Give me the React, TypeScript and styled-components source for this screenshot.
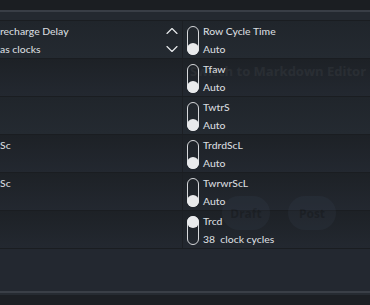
import React from "react";
import styled, { createGlobalStyle } from "styled-components";
import { ChevronUp, ChevronDown } from "lucide-react";

const Global = createGlobalStyle`
  html, body { margin: 0; padding: 0; background: #1c1f24; }
  body { font-family: Lato, "Open Sans", sans-serif; overflow: hidden; }
`;

const Page = styled.div`
  position: relative;
  width: 370px;
  height: 305px;
  display: flex;
  flex-direction: column;
  background: #1c1f24;
  overflow: hidden;
`;

const TopStrip = styled.div`
  height: 10px;
  background: #1b1e22;
  border-bottom: 2px solid #393e46;
`;

const HeaderBand = styled.div`
  height: 8px;
  background: #242930;
`;

const Rows = styled.div`
  display: flex;
  flex-direction: column;
`;

const Row = styled.div<{ $tone: "light" | "dark" }>`
  height: 38px;
  box-sizing: border-box;
  display: grid;
  grid-template-columns: 183px 1fr;
  border-top: 1px solid #1a1d21;
  background: ${(p) =>
    p.$tone === "light"
      ? "linear-gradient(#20252b, #242a31)"
      : "linear-gradient(#1d2126, #232830)"};
`;

const LeftCell = styled.div`
  display: grid;
  grid-template-columns: 1fr 20px;
  grid-template-rows: 18px 18px;
  align-items: center;
  padding-top: 1px;
  overflow: hidden;
  border-right: 1px solid #1c1f24;
`;

const LeftText = styled.span`
  font-size: 10.4px;
  font-weight: 500;
  color: #d6dadf;
  white-space: nowrap;
  line-height: 18px;
`;

const Chevron = styled.span`
  display: flex;
  align-items: center;
  justify-content: center;
  color: #e6e8ea;
`;

const RightCell = styled.div`
  display: flex;
  align-items: center;
  gap: 4px;
  padding-left: 4px;
`;

const Switch = styled.div<{ $on: boolean }>`
  width: 12px;
  height: 29px;
  box-sizing: border-box;
  border: 1.3px solid #d6d8db;
  border-radius: 6px;
  display: flex;
  flex-direction: column;
  justify-content: ${(p) => (p.$on ? "flex-start" : "flex-end")};
  align-items: center;
  margin-top: 1px;
`;

const Knob = styled.div`
  width: 12px;
  height: 12px;
  border-radius: 50%;
  background: #e9eaec;
  flex-shrink: 0;
  margin: -1px;
`;

const Texts = styled.div`
  display: flex;
  flex-direction: column;
  justify-content: center;
`;

const Label = styled.span`
  font-size: 10.4px;
  font-weight: 500;
  line-height: 18px;
  color: #d6dadf;
  white-space: pre;
`;

const Footer = styled.div`
  flex: 1;
  display: flex;
  flex-direction: column;
`;

const FooterBody = styled.div`
  height: 42px;
  border-top: 1px solid #1a1d21;
  background: #232830;
`;

const FooterLine = styled.div`
  height: 2px;
  background: #3a3f47;
`;

const FooterBottom = styled.div`
  flex: 1;
  background: #1c1f24;
  border-top: 2px solid #262b32;
`;

/* faint ghost layer from a cross-fade, lying over the content */
const Ghost = styled.div`
  position: absolute;
  inset: 0;
  pointer-events: none;
  opacity: 0.045;
  color: #ffffff;
  font-family: "Open Sans", sans-serif;
`;

const GhostTitle = styled.span`
  position: absolute;
  left: 190px;
  top: 62px;
  font-size: 13px;
  font-weight: 700;
  white-space: nowrap;
`;

const GhostButton = styled.span<{ $x: number }>`
  position: absolute;
  left: ${(p) => p.$x}px;
  top: 196px;
  width: 48px;
  height: 34px;
  border-radius: 17px;
  background: #8aa6d8;
  display: flex;
  align-items: center;
  justify-content: center;
  font-size: 12px;
  font-weight: 700;
  color: #000;
`;

type RowData = {
  left?: [string, string];
  chevrons?: boolean;
  label: string;
  value: string;
  on: boolean;
  tone: "light" | "dark";
};

const rows: RowData[] = [
  { left: ["recharge Delay", "as clocks"], chevrons: true, label: "Row Cycle Time", value: "Auto", on: false, tone: "light" },
  { label: "Tfaw", value: "Auto", on: false, tone: "dark" },
  { label: "TwtrS", value: "Auto", on: false, tone: "light" },
  { left: ["Sc", ""], label: "TrdrdScL", value: "Auto", on: false, tone: "dark" },
  { left: ["Sc", ""], label: "TwrwrScL", value: "Auto", on: false, tone: "dark" },
  { label: "Trcd", value: "38  clock cycles", on: true, tone: "dark" },
];

export default function App() {
  return (
    <>
      <Global />
      <Page>
        <TopStrip />
        <HeaderBand />
        <Rows>
          {rows.map((r, i) => (
            <Row key={i} $tone={r.tone}>
              <LeftCell>
                <LeftText>{r.left ? r.left[0] : ""}</LeftText>
                <Chevron>{r.chevrons && <ChevronUp size={24} strokeWidth={1.4} />}</Chevron>
                <LeftText>{r.left ? r.left[1] : ""}</LeftText>
                <Chevron>{r.chevrons && <ChevronDown size={24} strokeWidth={1.4} />}</Chevron>
              </LeftCell>
              <RightCell>
                <Switch $on={r.on}>
                  <Knob />
                </Switch>
                <Texts>
                  <Label>{r.label}</Label>
                  <Label>{r.value}</Label>
                </Texts>
              </RightCell>
            </Row>
          ))}
        </Rows>
        <Footer>
          <FooterBody />
          <FooterLine />
          <FooterBottom />
        </Footer>
        <Ghost>
          <GhostTitle>Switch to Markdown Editor</GhostTitle>
          <GhostButton $x={222}>Draft</GhostButton>
          <GhostButton $x={288}>Post</GhostButton>
        </Ghost>
      </Page>
    </>
  );
}
